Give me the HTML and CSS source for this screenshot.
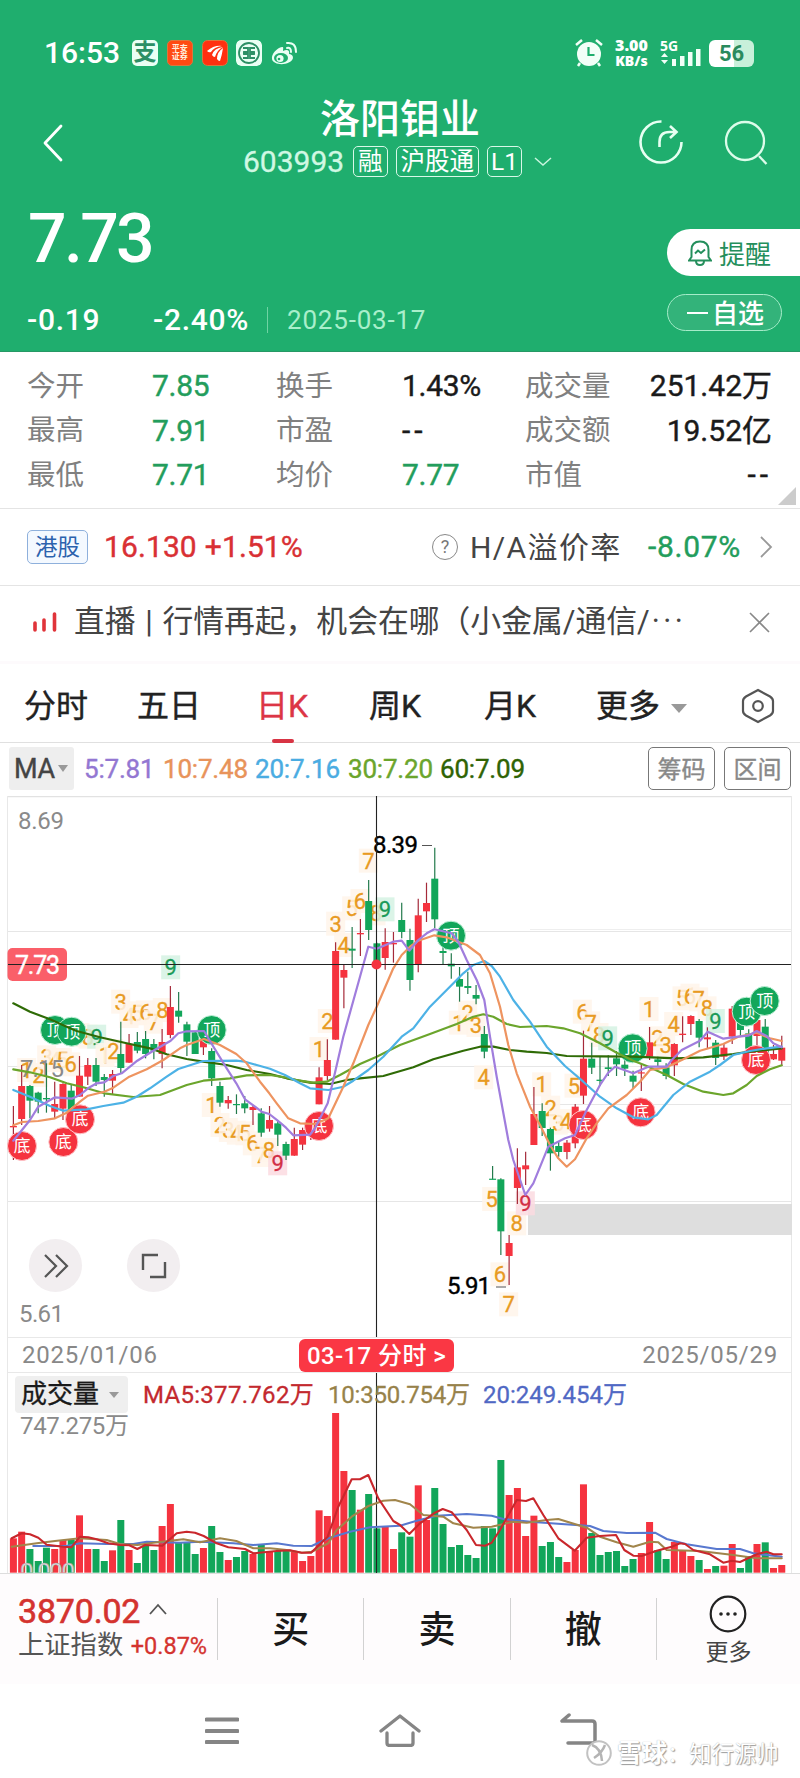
FILE: index.html
```html
<!DOCTYPE html>
<html lang="zh-CN">
<head>
    <meta charset="UTF-8">
    <meta name="viewport" content="width=device-width, initial-scale=1.0">
    <title>洛阳钼业 603993</title>
    <link rel="stylesheet" href="styles.css">
</head>
<body>
    <header class="header">
        <div class="status-bar">
            <span class="time">16:53</span>
            <div class="app-icons">
                <span class="app-icon alipay">支</span>
                <span class="app-icon pingan"><i>平安</i><i>证券</i></span>
                <svg class="app-icon" viewBox="0 0 26 26"><rect x=".5" y=".5" width="25" height="25" rx="5" fill="#ff3010" stroke="#d9783e"/><path d="M5 11q7-6 15-5-8 1-11 6-2 1-4-1zM10 15q2-7 11-8-6 3-8 10-2 0-3-2zM15 19q0-7 6-11-1 7-3 13-2 0-3-2z" fill="#fff"/></svg>
                <svg class="app-icon" viewBox="0 0 26 26"><rect width="26" height="26" rx="5" fill="#eafff4"/><g fill="none" stroke="#2c8f65" stroke-width="1.8"><circle cx="13" cy="13" r="10"/><path d="M7 8h5v4H8v2h4v4H7M19 8h-5v4h4v2h-4v4h5M7 13h2M17 13h2"/></g></svg>
                <svg class="app-icon" viewBox="0 0 26 26"><path d="M11 7C6 8 0 14 1 19c1 7 19 7 21-1 0-3-2-4-4-4 1-4-2-5-6-3 0-2 1-4-1-4z" fill="#eafff4"/><ellipse cx="10" cy="18" rx="7" ry="5" fill="#1fae6e"/><circle cx="9" cy="18.500" r="3.600" fill="#eafff4"/><circle cx="8" cy="19" r="1.300" fill="#1fae6e"/><path d="M16 3q9-1 9 9M16 8q4-1 4 4" fill="none" stroke="#eafff4" stroke-width="2" stroke-linecap="round"/></svg>
            </div>
            <div class="status-right">
                <svg width="28" height="28" viewBox="0 0 28 28"><circle cx="14" cy="15" r="12" fill="#f2fff8"/><path d="M1 6l6-5M27 6l-6-5M5 24l-2 3M23 24l2 3" stroke="#f2fff8" stroke-width="2.500"/><path d="M13.500 8v8h6" fill="none" stroke="#1fae6e" stroke-width="2.200"/></svg>
                <div class="net-speed"><b>3.00</b><b>KB/s</b></div>
                <div class="signal">
                    <b>5G</b>
                    <svg width="42" height="18" viewBox="0 0 42 18"><path d="M1 8l3.500-4L8 8zM1 11l3.500 4L8 11zM12 10h4v7h-4zM20 7h4.500v10H20zM28 3h4.500v14H28zM36 0h4.500v17H36z" fill="#f2fff8"/></svg>
                </div>
                <div class="battery"><span>56</span></div>
            </div>
        </div>
        <div class="title-bar">
            <svg class="back" width="22" height="38" viewBox="0 0 22 38"><path d="M19 2L3 19l16 17" fill="none" stroke="#fff" stroke-width="2.800" stroke-linecap="round" stroke-linejoin="round"/></svg>
            <div class="title">
                <h1>洛阳钼业</h1>
                <div class="code-row">
                    <span class="code">603993</span>
                    <span class="tag">融</span>
                    <span class="tag">沪股通</span>
                    <span class="tag">L1</span>
                    <svg class="down" width="18" height="12" viewBox="0 0 18 12"><path d="M1 2l8 7 8-7" fill="none" stroke="#c8f5de" stroke-width="1.500"/></svg>
                </div>
            </div>
            <div class="title-actions">
                <svg width="44" height="44" viewBox="0 0 44 44"><g fill="none" stroke="#e6fff2" stroke-width="2.600"><path d="M22.500 1.500A20.500 20.500 0 1 0 42.500 22"/><path d="M20.500 27v-5q0-10 10-10h7M31 6l6.500 6-6.500 6"/></g></svg>
                <svg width="44" height="46" viewBox="0 0 44 46"><g fill="none" stroke="#dcfcea" stroke-width="2.300"><circle cx="21" cy="21" r="19"/><path d="M35 36l7.500 8"/></g></svg>
            </div>
        </div>
        <div class="quote">
            <div class="quote-left">
                <div class="price">7.73</div>
                <div class="change-row">
                    <span class="change">-0.19</span>
                    <span class="change pct">-2.40%</span>
                    <span class="date">2025-03-17</span>
                </div>
            </div>
            <div class="quote-right">
                <button class="remind">
                    <svg width="24" height="26" viewBox="0 0 24 26"><g fill="none" stroke="#248f5c" stroke-width="2"><path d="M1 20.500h22l-2.500-3.500v-7q0-8.500-8.500-8.500T3.500 10v7zM8 21q0 4 4 4t4-4"/><path d="M7 13.500l3-3 3 2.500 4-3.500"/></g></svg>
                    提醒
                </button>
                <button class="favorite"><i></i>自选</button>
            </div>
        </div>
    </header>

    <section class="stats">
        <span>今开</span><b class="green">7.85</b><span>换手</span><b>1.43%</b><span>成交量</span><b class="last">251.42万</b>
        <span>最高</span><b class="green">7.91</b><span>市盈</span><b class="dashes">--</b><span>成交额</span><b class="last">19.52亿</b>
        <span>最低</span><b class="green">7.71</b><span>均价</span><b class="green">7.77</b><span>市值</span><b class="last dashes">--</b>
    </section>

    <section class="hk-row">
        <span class="hk-badge">港股</span>
        <span class="hk-price">16.130</span>
        <span class="hk-change">+1.51%</span>
        <span class="question">?</span>
        <span class="premium">H/A溢价率</span>
        <span class="premium-value">-8.07%</span>
        <svg width="14" height="22" viewBox="0 0 14 22"><path d="M2 1l10 10L2 21" fill="none" stroke="#999" stroke-width="1.800"/></svg>
    </section>

    <section class="live-row">
        <svg width="24" height="22" viewBox="0 0 24 22"><path d="M2 12v7M11 9v10M21.500 3v16" stroke="#e0343a" stroke-width="3.600" stroke-linecap="round"/></svg>
        <p>直播 | 行情再起，机会在哪（小金属/通信/<em>···</em></p>
        <svg width="21" height="21" viewBox="0 0 21 21"><path d="M1 1l19 19M20 1L1 20" stroke="#888" stroke-width="1.600"/></svg>
    </section>

    <nav class="tabs">
        <span>分时</span>
        <span>五日</span>
        <span class="active">日K</span>
        <span>周K</span>
        <span>月K</span>
        <span>更多<i class="triangle"></i></span>
        <svg width="34" height="36" viewBox="0 0 34 36"><g fill="none" stroke="#555" stroke-width="2.200"><path d="M17 2l12 6.500q3 2 3 4.500v10q0 2.500-3 4.500L17 34 5 27.500Q2 25.500 2 23V13q0-2.500 3-4.500z"/><circle cx="17" cy="18" r="4.800"/></g></svg>
    </nav>

    <div class="ma-row">
        <span class="ma-select">MA<i class="triangle"></i></span>
        <span class="ma5">5:7.81</span>
        <span class="ma10">10:7.48</span>
        <span class="ma20">20:7.16</span>
        <span class="ma30">30:7.20</span>
        <span class="ma60">60:7.09</span>
        <button>筹码</button>
        <button>区间</button>
    </div>

    <div class="price-chart">
        <svg id="kline" width="800" height="541"></svg>
        <button class="chart-btn next"><svg width="26" height="24" viewBox="0 0 26 24"><path d="M2 1l11 11L2 23M13 1l11 11-11 11" fill="none" stroke="#555" stroke-width="2.200"/></svg></button>
        <button class="chart-btn expand"><svg width="26" height="26" viewBox="0 0 26 26"><path d="M17 2H2v15M24 9v15H9" fill="none" stroke="#555" stroke-width="2.400"/></svg></button>
    </div>

    <div class="date-row">
        <span>2025/01/06</span>
        <b>03-17 分时 &gt;</b>
        <span>2025/05/29</span>
    </div>

    <div class="volume">
        <div class="volume-head">
            <span class="volume-select">成交量<i class="triangle"></i></span>
            <span class="vol5">MA5:377.762万</span>
            <span class="vol10">10:350.754万</span>
            <span class="vol20">20:249.454万</span>
        </div>
        <svg id="volume" width="800" height="160"></svg>
    </div>

    <footer class="trade-bar">
        <div class="index">
            <div class="index-value">3870.02<svg width="18" height="12" viewBox="0 0 18 12"><path d="M1 11l8-9 8 9" fill="none" stroke="#555" stroke-width="1.800"/></svg></div>
            <div class="index-name">上证指数 <b>+0.87%</b></div>
        </div>
        <div class="trade">买</div>
        <div class="trade">卖</div>
        <div class="trade">撤</div>
        <div class="more">
            <svg width="38" height="38" viewBox="0 0 38 38"><circle cx="19" cy="19" r="17.300" fill="none" stroke="#222" stroke-width="2.200"/><g fill="#222"><circle cx="12" cy="19" r="1.800"/><circle cx="19" cy="19" r="1.800"/><circle cx="26" cy="19" r="1.800"/></g></svg>
            <span>更多</span>
        </div>
    </footer>

    <div class="system-nav">
        <svg class="menu" width="34" height="28" viewBox="0 0 34 28"><path d="M1.500 2.500h31M1.500 14h31M1.500 25h31" stroke="#858585" stroke-width="4" stroke-linecap="round"/></svg>
        <svg width="42" height="34" viewBox="0 0 42 34"><path d="M2 18L21 3l19 15M8 20v10q0 2.500 3 2.500h20q3 0 3-2.500V20" fill="none" stroke="#858585" stroke-width="3.300" stroke-linecap="round" stroke-linejoin="round"/></svg>
        <svg width="38" height="34" viewBox="0 0 38 34"><path d="M9 2L2 8h30q3 0 3 3v19H8" fill="none" stroke="#858585" stroke-width="3.500" stroke-linecap="round" stroke-linejoin="round"/></svg>
        <div class="watermark">
            <svg width="28" height="30" viewBox="0 0 28 30"><circle cx="14" cy="15" r="11.800" fill="#fff" stroke="#c2c2c2" stroke-width="2"/><path d="M7 7q9 3 10 16M20 7q-3 8-11 13" fill="none" stroke="#b4b4b4" stroke-width="2.500"/></svg>
            <span><b>雪球</b>：知行源帅</span>
        </div>
    </div>

    <script src="chart.js"></script>
</body>
</html>
```

FILE: styles.css
```css
* {
    box-sizing: border-box;
}

body, html {
    margin: 0;
    padding: 0;
}

body {
    width: 800px;
    height: 1778px;
    overflow: hidden;
    background: #fff;
    color: #222;
    font-family: Roboto, 'Noto Sans CJK SC', sans-serif;
    line-height: 1;
}

svg {
    display: block;
    flex: none;
}

i, em {
    font-style: normal;
}

span, b, p {
    white-space: nowrap;
}

button {
    padding: 0;
    border: none;
    font-family: inherit;
}

.green {
    color: #239d5c !important;
}

.triangle {
    display: inline-block;
    border: 5px solid transparent;
    border-top: 7px solid #999;
    border-bottom: none;
}

/* Green header */
.header {
    height: 352px;
    background: #1fae6e;
    color: #fff;
    border-bottom: 1px solid #279865;
}

.status-bar {
    height: 86px;
    padding: 20px 46px 0 44px;
    display: flex;
    align-items: center;
}

.time {
    width: 88px;
    font-size: 30px;
    font-weight: 500;
}

.app-icons {
    display: flex;
    gap: 8.800px;
}

.app-icon {
    width: 26px;
    height: 26px;
    border-radius: 5px;
}

.alipay {
    background: #eafff4;
    color: #2c8f65;
    font-size: 23px;
    font-weight: 700;
    line-height: 25px;
    text-align: center;
}

.pingan {
    padding-top: 4px;
    background: #ff4a12;
    border: 1px solid #d9783e;
    color: #ffeedd;
    font-size: 8px;
    font-weight: 700;
    text-align: center;
}

.pingan i {
    display: block;
}

.status-right {
    margin-left: auto;
    display: flex;
    align-items: center;
}

.net-speed {
    width: 35px;
    margin-left: 11px;
    font: 700 16px/15px 'Noto Sans', sans-serif;
    text-align: center;
}

.net-speed b {
    display: block;
}

.net-speed b + b {
    font-size: 14px;
}

.signal {
    width: 42px;
    margin-left: 11px;
}

.signal b {
    display: block;
    font: 700 14px/11px 'Noto Sans', sans-serif;
}

.signal svg {
    margin-top: -2px;
}

.battery {
    width: 45px;
    height: 27px;
    margin-left: 7px;
    border-radius: 6px;
    background: linear-gradient(90deg, #fff 55%, #c8f0da 55%);
    color: #2a8a5d;
    font-size: 22px;
    font-weight: 700;
    line-height: 28px;
    text-align: center;
}

.title-bar {
    height: 98px;
    padding: 0 32px 0 42px;
    display: flex;
    align-items: flex-start;
}

.back {
    margin-top: 38px;
}

.title {
    width: 320px;
    margin-left: 172px;
}

.title h1 {
    margin: 13px 0 5px;
    font-size: 40px;
    line-height: 42px;
    font-weight: 500;
    text-indent: 84px;
    white-space: nowrap;
}

.code-row {
    display: flex;
    align-items: center;
    height: 31px;
}

.code {
    margin: 0 9px 0 7px;
    width: 101px;
    font-size: 30px;
    color: #d0f8e3;
    -webkit-text-stroke: 0.3px;
}

.tag {
    height: 31px;
    margin-right: 8px;
    padding: 0 4px;
    border: 1.500px solid #d8f8e8;
    border-radius: 5px;
    font-size: 24.500px;
    line-height: 29px;
}

.tag:nth-child(4) {
    padding: 0 3px;
}

.down {
    margin-left: 4px;
}

.title-actions {
    display: flex;
    gap: 41px;
    margin-top: 34px;
    margin-left: auto;
}

.quote {
    display: flex;
    justify-content: space-between;
    height: 167px;
}

.quote-left {
    padding-left: 27px;
}

.price {
    height: 103px;
    padding-top: 21px;
    font-size: 68px;
    font-weight: 500;
    letter-spacing: -2.700px;
    text-indent: 1px;
}

.change-row {
    display: flex;
    align-items: center;
    height: 66px;
}

.change {
    width: 126px;
    font-size: 30px;
    font-weight: 500;
    letter-spacing: 0.700px;
}

.change.pct {
    width: 114px;
}

.date {
    padding-left: 19px;
    border-left: 1px solid #6fd3a3;
    font-size: 26px;
    color: #a9efcb;
    letter-spacing: 0.800px;
}

.quote-right {
    width: 133px;
    padding-top: 45px;
}

.remind {
    display: flex;
    align-items: center;
    gap: 7px;
    width: 133px;
    height: 47px;
    padding-left: 21px;
    border-radius: 24px 0 0 24px;
    background: #fff;
    color: #248f5c;
    font-size: 26px;
}

.favorite {
    display: flex;
    align-items: center;
    gap: 4px;
    width: 115px;
    height: 37px;
    margin-top: 18px;
    padding: 0 0 3px 19px;
    border: 1px solid #a5ecc9;
    border-radius: 19px;
    background: #33b37a;
    color: #fff;
    font-size: 26px;
    font-weight: 500;
}

.favorite i {
    width: 21px;
    height: 2px;
    margin-top: 3px;
    background: #fff;
}

/* Quote numbers */
.stats {
    position: relative;
    display: grid;
    grid-template-columns: 125px 124px 126px 123px 90px 1fr;
    grid-auto-rows: 44.500px;
    align-items: center;
    height: 157px;
    padding: 12px 28px 0 27px;
    border-bottom: 1px solid #e4e4e4;
    font-size: 28.500px;
}

.stats span {
    padding-top: 1px;
    color: #808080;
}

.stats b {
    font-size: 30px;
    font-weight: 400;
    color: #1a1a1a;
    letter-spacing: -0.3px;
    -webkit-text-stroke: 0.4px;
}

.stats .last {
    text-align: right;
    letter-spacing: 0;
}

.stats .dashes {
    letter-spacing: 4px;
}

.stats::after {
    content: '';
    position: absolute;
    right: 4px;
    bottom: 3px;
    border: 9px solid #ccc;
    border-top-color: transparent;
    border-left-color: transparent;
}

.hk-row {
    display: flex;
    align-items: center;
    height: 77px;
    padding: 0 27px;
    border-bottom: 1px solid #e4e4e4;
    font-size: 30px;
}

.hk-badge {
    width: 61px;
    height: 34px;
    margin-right: 16px;
    border: 1.500px solid #8eb0dc;
    border-radius: 5px;
    background: #f4f9ff;
    color: #2c62ad;
    font-size: 22.500px;
    line-height: 33px;
    text-align: center;
}

.hk-price, .hk-change {
    color: #d93034;
    letter-spacing: 0.1px;
    -webkit-text-stroke: 0.4px;
}

.hk-change {
    margin-left: 8px;
}

.question {
    width: 26px;
    height: 26px;
    margin-left: auto;
    margin-right: 12px;
    border: 1.800px solid #888;
    border-radius: 50%;
    color: #777;
    font-size: 18px;
    line-height: 23px;
    text-align: center;
}

.premium {
    width: 178px;
    padding-top: 2px;
    color: #444;
    letter-spacing: 1.400px;
}

.premium-value {
    width: 111px;
    color: #239d5c;
    letter-spacing: 0.700px;
    -webkit-text-stroke: 0.4px;
}

.live-row {
    display: flex;
    align-items: center;
    height: 75px;
    padding: 0 29px 3px 33px;
}

.live-row p {
    width: 675px;
    margin: 0 0 0 17px;
    padding-top: 1px;
    font-size: 30.800px;
    word-spacing: 2px;
    color: #444;
}

.live-row em {
    margin-left: 2px;
    letter-spacing: 3.500px;
}

.tabs {
    position: relative;
    display: grid;
    grid-template-columns: 113px 119px 113px 115px 112px 145px 34px;
    align-items: center;
    height: 82px;
    padding: 6px 0 0 24px;
    border-top: 3px solid #fdfafc;
    border-bottom: 1px solid #e0e0e0;
    font-size: 32px;
    -webkit-text-stroke: 0.4px;
}

.tabs .active {
    position: relative;
    color: #dc3545;
}

.tabs .active::after {
    content: '';
    position: absolute;
    left: 16px;
    top: 49px;
    width: 22px;
    height: 4px;
    border-radius: 2px;
    background: #d83444;
}

.tabs .triangle {
    margin: 0 0 4px 11px;
    border-width: 9px 8px 0;
}

.ma-row {
    display: flex;
    align-items: center;
    height: 53px;
    padding: 0 9px 2px 9px;
    font-size: 26px;
    letter-spacing: -0.2px;
    -webkit-text-stroke: 0.4px;
}

.ma-select {
    width: 65px;
    height: 43px;
    margin-right: 10px;
    padding-left: 5px;
    background: #eee;
    color: #444;
    font-size: 27px;
    line-height: 44px;
    border-radius: 3px;
}

.ma-select .triangle {
    margin: 0 0 6px 3px;
    border-width: 7px 5px 0;
}

.ma5 {
    width: 79px;
    color: #9377d2;
}

.ma10 {
    width: 92px;
    color: #e8935a;
}

.ma20 {
    width: 93px;
    color: #4aace2;
}

.ma30 {
    width: 92px;
    color: #6ba52c;
}

.ma60 {
    color: #2f6304;
}

.ma-row button {
    width: 67px;
    height: 43px;
    padding-bottom: 3px;
    border: 1.500px solid #777;
    border-radius: 5px;
    background: #fff;
    color: #888;
    font-size: 24px;
}

.ma60 + button {
    margin-left: auto;
    margin-right: 9px;
}

/* Charts */
.price-chart {
    position: relative;
    height: 541px;
}

.chart-btn {
    position: absolute;
    top: 443px;
    width: 53px;
    height: 53px;
    border-radius: 50%;
    background: #f2eef0;
}

.chart-btn svg {
    margin: 0 auto;
}

.next {
    left: 29px;
}

.expand {
    left: 127px;
}

.axis {
    font-size: 24px;
    fill: #8a8a8a;
}

.axis.dark {
    fill: #000;
    stroke: #000;
    stroke-width: 0.4px;
}

.axis.zero {
    fill: #dcdcdc;
    stroke: #999;
    stroke-width: 0.5px;
}

.price-tag {
    font-size: 25px;
    fill: #fff;
    stroke: #fff;
    stroke-width: 0.4px;
}

.mark {
    font-size: 22px;
    text-anchor: middle;
}

.badge {
    font-size: 17px;
    fill: #fff;
    text-anchor: middle;
}

.date-row {
    display: flex;
    align-items: center;
    justify-content: space-between;
    height: 36px;
    margin: 0 8px 0 7px;
    padding: 0 13px 0 14px;
    border: 1px solid #e8e8e8;
    font-size: 24px;
    color: #888;
    letter-spacing: 0.8px;
}

.date-row b {
    width: 155px;
    height: 33px;
    margin-right: 47px;
    border-radius: 6px;
    background: #fa3744;
    color: #fff;
    font-size: 24px;
    font-weight: 500;
    line-height: 34px;
    text-align: center;
    letter-spacing: 0.4px;
}

.volume {
    height: 200px;
}

.volume-head {
    position: relative;
    display: flex;
    align-items: center;
    height: 40px;
    padding-left: 15px;
    padding-top: 3px;
    font-size: 24px;
    -webkit-text-stroke: 0.3px;
}

.volume-select {
    width: 113px;
    height: 37px;
    margin-right: 15px;
    padding-left: 6px;
    border-radius: 4px;
    background: #efefef;
    color: #1a1a1a;
    font-size: 26px;
    line-height: 37px;
}

.volume-select .triangle {
    margin: 0 0 5px 10px;
    border-width: 6px 5.500px 0;
}

.vol5 {
    width: 185px;
    color: #c3292e;
    letter-spacing: 0.3px;
}

.vol10 {
    width: 155px;
    color: #97824a;
    letter-spacing: -0.2px;
}

.vol20 {
    color: #5068c4;
}

#volume {
    overflow: visible;
}

/* Bottom bar */
.trade-bar {
    display: flex;
    align-items: flex-start;
    height: 111px;
    padding-top: 24px;
    border-top: 1px solid #ddd;
    background: #fefcfd;
}

.index {
    width: 217px;
    padding-left: 18px;
}

.index-value {
    display: flex;
    align-items: center;
    height: 26px;
    font-size: 34px;
    color: #d4332f;
    -webkit-text-stroke: 0.6px;
    letter-spacing: -0.2px;
}

.index-value svg {
    margin-left: 9px;
    margin-bottom: 4px;
}

.index-name {
    margin-top: 8px;
    font-size: 26.300px;
    color: #555;
}

.index-name b {
    margin-left: 1px;
    font-size: 23.500px;
    font-weight: 400;
    color: #d4332f;
    -webkit-text-stroke: 0.3px;
}

.trade {
    width: 146.300px;
    height: 62px;
    border-left: 1px solid #d2d2d2;
    font-size: 37px;
    font-weight: 500;
    line-height: 66px;
    text-align: center;
    color: #1a1a1a;
}

.more {
    flex: 1;
    height: 62px;
    border-left: 1px solid #d2d2d2;
    display: flex;
    flex-direction: column;
    align-items: center;
    font-size: 23px;
    color: #444;
}

.more svg {
    margin-top: -3px;
}

.more span {
    margin-top: 8px;
}

.system-nav {
    position: relative;
    display: flex;
    align-items: flex-start;
    justify-content: space-between;
    height: 94px;
    padding: 29px 202px 0 205px;
}

.menu {
    margin-top: 4px;
}

.watermark {
    position: absolute;
    left: 585px;
    top: 54px;
    display: flex;
    align-items: center;
    gap: 4px;
    font-size: 22.300px;
    color: #fff;
    text-shadow: 1px 1px 1px #999, 0 0 1px #aaa;
}

.watermark b {
    font-size: 25px;
}
```

FILE: chart.js
```js
const RED = '#f5333f';
const GREEN = '#12a65a';
const STEP = 8.262;
const FIRST = 13.4;

// [direction, body top, body bottom, high, low] in thirds of a pixel
const candles = [
    ['r',888,892,828,990],['r',768,867,705,885],['g',768,812,765,865],['g',788,815,785,850],['g',804,808,700,848],
    ['r',822,845,755,865],['r',762,836,760,870],['g',782,850,765,890],['r',737,800,678,800],['r',705,740,684,765],
    ['g',705,755,684,768],['g',741,750,732,800],['r',732,752,720,795],['g',672,714,575,730],['r',642,698,612,698],
    ['g',636,662,606,670],['g',627,672,603,685],['g',642,662,627,688],['r',636,672,597,715],['r',531,615,468,625],
    ['g',542,560,486,578],['g',583,635,575,678],['g',607,672,605,672],['r',625,652,620,675],['g',663,745,655,768],
    ['g',768,818,755,830],['r',810,820,798,836],['g',822,824,793,852],['g',820,835,798,850],['r',831,840,826,885],
    ['g',850,908,835,920],['r',870,896,828,905],['g',880,914,870,948],['g',942,977,935,990],['r',927,977,893,977],
    ['r',900,944,893,960],['r',890,910,860,930],['r',742,823,712,823],['r',690,738,628,750],['r',363,629,337,629],
    ['r',420,443,405,535],['g',356,362,291,414],['r',309,313,267,378],['g',213,300,150,330],['g',340,400,338,400],
    ['r',336,384,295,419],['r',339,343,306,398],['g',270,306,218,325],['g',330,450,296,482],['r',256,402,206,427],
    ['r',219,244,158,276],['g',146,268,53,295],['g',363,369,345,402],['g',401,409,370,446],['g',447,470,411,515],
    ['g',468,474,425,492],['g',495,506,465,523],['g',612,665,588,685],['g',1046,1049,1008,1048],['g',1048,1204,1045,1275],
    ['r',1239,1278,1215,1365],['r',1012,1074,955,1122],['r',1006,1018,965,1065],['r',852,945,771,945],['g',843,894,820,918],
    ['g',897,970,893,1022],['g',948,966,935,980],['r',938,966,930,988],['r',830,940,822,955],['r',686,797,602,822],
    ['g',686,713,638,732],['g',749,753,680,768],['g',712,717,676,738],['g',685,703,663,738],['g',704,716,680,738],
    ['g',737,755,722,775],['r',727,730,700,783],['r',637,680,591,690],['g',688,696,680,710],['g',712,738,700,748],
    ['r',642,706,640,738],['r',611,615,559,637],['r',558,582,556,615],['g',573,623,567,652],['r',622,628,592,656],
    ['g',638,684,630,705],['r',653,680,640,690],['r',536,620,528,642],['g',570,600,530,620],['g',610,656,598,675],
    ['r',570,618,522,655],['g',590,690,567,695],['r',672,688,645,690],['r',653,692,617,708]
];

const averages = [
    ['#2f6b06', '40,520 90,545 150,568 200,590 230,603 300,622 380,640 450,655 500,673 560,687 610,695 680,705 740,720 810,732 860,745 930,758 990,762 1040,750 1080,745 1150,738 1240,712 1300,688 1390,662 1440,650 1480,650 1530,660 1580,665 1640,669 1700,678 1800,679 1900,680 2030,685 2110,682 2200,672 2250,665 2345,655'],
    ['#6ba52c', '40,718 90,727 150,742 200,760 250,772 313,790 400,801 480,795 560,765 610,752 690,745 740,736 810,735 860,743 900,752 940,758 980,755 1020,735 1080,702 1130,680 1200,645 1290,612 1370,582 1420,560 1450,553 1480,560 1520,582 1560,591 1640,588 1690,595 1740,610 1800,640 1850,668 1900,692 1940,708 2000,735 2050,762 2110,785 2170,795 2200,790 2240,765 2270,738 2310,718 2345,706'],
    ['#4db2e6', '40,780 90,800 150,828 190,842 260,838 310,828 370,818 410,800 450,775 500,740 535,717 610,693 709,692 735,695 770,705 810,716 855,735 900,760 930,775 985,780 1030,770 1060,752 1105,720 1150,680 1205,620 1240,595 1290,530 1340,480 1390,430 1420,405 1453,393 1475,408 1500,440 1540,510 1590,575 1640,650 1695,708 1750,755 1800,800 1850,835 1900,862 1945,868 1970,855 2020,795 2070,755 2130,725 2160,705 2200,675 2250,663 2300,655 2345,650'],
    ['#ee9460', '40,886 66,876 115,873 165,865 200,848 240,815 264,797 313,785 340,773 388,740 440,718 490,690 540,655 560,645 612,627 660,645 709,672 740,700 780,755 808,790 830,820 865,865 900,880 945,882 985,865 1030,770 1060,700 1105,585 1130,530 1180,415 1205,375 1230,350 1255,332 1303,316 1340,322 1400,345 1440,375 1470,430 1500,530 1525,645 1550,730 1590,830 1620,885 1650,945 1675,985 1700,1010 1725,988 1760,925 1790,880 1825,835 1880,795 1920,755 1950,720 2000,712 2050,688 2100,662 2170,642 2215,620 2270,608 2310,625 2345,633'],
    ['#a07ddd', '40,932 66,900 90,870 115,830 165,802 215,806 240,795 264,775 290,760 313,757 340,738 365,730 412,692 460,662 512,632 535,610 560,604 612,603 634,640 680,715 709,760 735,808 785,845 808,852 833,872 858,893 880,916 930,914 945,895 983,820 1000,750 1030,620 1080,440 1105,350 1130,356 1180,335 1205,332 1228,362 1255,330 1280,310 1303,298 1355,310 1375,335 1400,390 1430,450 1453,510 1470,620 1490,740 1525,930 1540,990 1576,1095 1600,1060 1645,950 1695,925 1725,915 1760,840 1800,765 1825,728 1845,710 1900,730 1945,710 2000,710 2015,690 2045,660 2100,632 2123,605 2170,626 2215,620 2245,617 2270,603 2300,618 2320,640 2345,652']
];

// sequence counters above and below the candles: [x, y, digit]
const marks = [
    [80,720,1],[115,735,2],[140,682,3],[165,690,4],[187,690,5],[212,703,6],[240,615,7],[264,620,8],[290,620,9,'g'],
    [315,675,1],[340,663,2],[362,515,3],[387,558,4],[411,550,5],[436,547,6],[460,575,7],[487,540,8],[512,412,9,'g'],
    [634,825,1],[660,885,2],[685,900,3],[709,908,4],[735,910,5],[757,940,6],[783,975,7],[807,960,8],[833,1000,9,'r'],
    [957,657,1],[982,573,2],[1007,281,3],[1031,345,4],[1055,235,5],[1080,213,6],[1105,92,7],[1128,250,8],[1155,238,9,'g'],
    [1375,578,1],[1403,548,2],[1428,585,3],[1451,742,4],[1475,1107,5],[1500,1333,6],[1526,1423,7],[1550,1180,8],[1576,1120,9,'r'],
    [1625,763,1],[1652,833,2],[1675,878,3],[1698,873,4],[1722,767,5],[1747,545,6],[1772,580,7],[1797,615,8],[1823,625,9,'g'],
    [1947,537,1],[1972,625,2],[1997,645,3],[2021,582,4],[2046,505,5],[2070,497,6],[2096,508,7],[2121,535,8],[2146,573,9,'g']
];
const markColors = { o: ['#e89a22', '#fff5ea'], g: ['#1b9a58', '#d5f2e3'], r: ['#d22f45', '#fcdbe1'] };

const badges = [
    [165,600,'顶'],[215,605,'顶'],[635,600,'顶'],[1353,317,'顶'],[1898,655,'顶'],[2240,545,'顶'],[2294,513,'顶'],
    [66,948,'底'],[190,936,'底'],[240,868,'底'],[957,888,'底'],[1750,885,'底'],[1922,847,'底'],[2268,690,'底']
];

// top of each volume bar, the base line is 608
const volumes = [
    505,485,537,573,533,537,510,510,436,537,537,573,541,450,540,579,528,540,468,402,517,517,552,534,468,546,570,561,543,552,
    525,543,543,541,546,573,558,421,438,129,303,360,419,372,475,470,537,487,500,346,450,354,462,531,525,555,564,468,475,270,
    375,354,498,437,528,516,561,576,540,343,489,555,546,543,588,567,549,456,540,567,516,540,558,570,597,588,587,522,594,558,
    522,517,594,585
];

const volumeAverages = [
    ['#5878cf', '100,528 200,528 240,520 320,522 400,522 440,515 540,518 600,515 700,520 760,525 830,520 880,527 935,528 985,505 1050,485 1110,472 1200,467 1250,452 1310,437 1400,432 1475,437 1510,447 1600,456 1770,468 1810,483 1880,489 1965,488 2000,507 2060,523 2150,537 2220,537 2260,550 2345,560'],
    ['#a1854b', '35,530 110,520 165,513 240,505 320,510 360,522 412,525 460,518 550,508 600,517 660,505 709,513 760,535 810,535 860,540 905,548 935,545 985,520 1010,480 1055,440 1105,408 1150,392 1185,390 1230,403 1270,435 1330,440 1360,460 1420,473 1475,470 1540,455 1580,458 1640,450 1675,447 1760,473 1800,500 1850,517 1900,530 1950,515 1975,517 2000,540 2100,543 2200,555 2270,565 2345,565'],
    ['#c9272c', '35,505 65,490 90,493 115,503 140,524 190,530 214,532 240,500 265,502 290,508 325,520 360,525 388,526 412,537 436,525 487,527 530,490 560,485 585,488 611,498 650,520 685,532 735,537 760,550 830,543 870,541 905,548 933,548 983,500 1015,410 1055,328 1080,328 1105,315 1135,385 1180,453 1200,465 1228,492 1260,460 1305,428 1328,417 1355,427 1400,480 1428,525 1455,527 1475,518 1500,480 1550,390 1578,393 1600,385 1630,435 1675,505 1724,542 1760,503 1800,498 1848,495 1873,540 1900,557 1925,558 1970,542 2015,530 2040,520 2055,522 2080,540 2130,553 2170,578 2195,572 2220,576 2270,553 2300,545 2320,553 2345,553']
];

function rect(x, y, w, h, fill, extra = '') {
    return `<rect x="${x}" y="${y}" width="${w}" height="${h}" fill="${fill}" ${extra}/>`;
}

function line(x1, y1, x2, y2, stroke, width = 1) {
    return `<path d="M${x1} ${y1}L${x2} ${y2}" stroke="${stroke}" stroke-width="${width}"/>`;
}

function label(x, y, text, length, cls = 'axis') {
    return `<text class="${cls}" x="${x}" y="${y}" textLength="${length}">${text}</text>`;
}

function curve(color, points, offset, width) {
    const scaled = points.split(' ').map(p => {
        const [x, y] = p.split(',');
        return (x / 3).toFixed(1) + ',' + (y / 3 + offset).toFixed(1);
    });
    return `<polyline points="${scaled.join(' ')}" fill="none" stroke="${color}" stroke-width="${width}" stroke-linejoin="round" stroke-linecap="round"/>`;
}

function drawKline() {
    const py = v => v / 3 + 34;
    let out = line(7, 0.5, 792, 0.5, '#e2e2e2', 1.5) + line(7.5, 0, 7.5, 541, '#e8e8e8') + line(791.5, 0, 791.5, 541, '#e8e8e8');
    [135.5, 270.5, 405.5].forEach(y => out += line(8, y, 791, y, '#e6e6e6'));
    out += line(530, 133.5, 791, 133.5, '#eee') + line(530, 308.5, 791, 308.5, '#e6e6e6');
    out += rect(528, 408, 264, 31, '#dedede');
    out += label(18, 33, '8.69', 46) + label(19, 526, '5.61', 45);

    marks.forEach(([x, y, n, kind = 'o']) => {
        const [color, bg] = markColors[kind];
        out += rect(x / 3 - 9.5, py(y) - 12, 19, 24, bg, 'opacity=".85"');
        out += `<text class="mark" x="${x / 3}" y="${py(y) + 8}" fill="${color}" stroke="${color}" stroke-width=".3">${n}</text>`;
    });
    out += label(20, 281, '7.15', 44);

    candles.forEach(([dir, top, bottom, high, low], i) => {
        const x = FIRST + STEP * i;
        out += line(x, py(high), x, py(low), dir === 'r' ? '#a52a3a' : '#237a4c', 1.2);
        out += rect(x - 3.5, py(top), 7, Math.max(1.2, (bottom - top) / 3), dir === 'r' ? RED : GREEN);
    });

    badges.forEach(([x, y, text]) => {
        const top = text === '顶';
        out += `<circle cx="${x / 3}" cy="${py(y)}" r="14.5" fill="${top ? GREEN : RED}" stroke="${top ? '#bdf0d6' : '#ffc2c6'}" stroke-width="1"/>`;
        out += `<text class="badge" x="${x / 3}" y="${py(y) + 6}">${text}</text>`;
    });
    averages.forEach(([color, points]) => out += curve(color, points, 34, 2.2));

    // crosshair
    out += label(373, 57, '8.39', 45, 'axis dark') + line(422, 49.5, 432, 49.5, '#555');
    out += label(447, 498, '5.91', 44, 'axis dark') + line(496, 491, 506, 491, '#555');
    out += line(376.5, 0, 376.5, 541, '#222', 1.1);
    out += rect(7.5, 152, 59.5, 33, '#f9434f', 'rx="5" opacity=".85"');
    out += line(8, 168.5, 791, 168.5, '#222', 1.1);
    out += `<circle cx="376.5" cy="168.500" r="5" fill="${RED}"/>`;
    out += label(15, 178, '7.73', 45, 'price-tag');
    document.getElementById('kline').innerHTML = out;
}

function drawVolume() {
    let out = line(7.5, -40, 7.5, 160, '#e8e8e8') + line(791.5, -40, 791.5, 160, '#e8e8e8');
    volumes.forEach((v, i) => {
        out += rect(FIRST + STEP * i - 3.5, v / 3 - 43, 7, (608 - v) / 3, candles[i][0] === 'r' ? RED : GREEN);
    });
    out += line(376.5, -40, 376.5, 160, '#222', 1.1);
    volumeAverages.forEach(([color, points]) => out += curve(color, points, -43, 2.1));
    out += label(20, 21, '747.275万', 109);
    out += `<svg width="100" height="159.500">${label(20, 167, '0.000', 55, 'axis zero')}</svg>`;
    document.getElementById('volume').innerHTML = out;
}

drawKline();
drawVolume();
```
